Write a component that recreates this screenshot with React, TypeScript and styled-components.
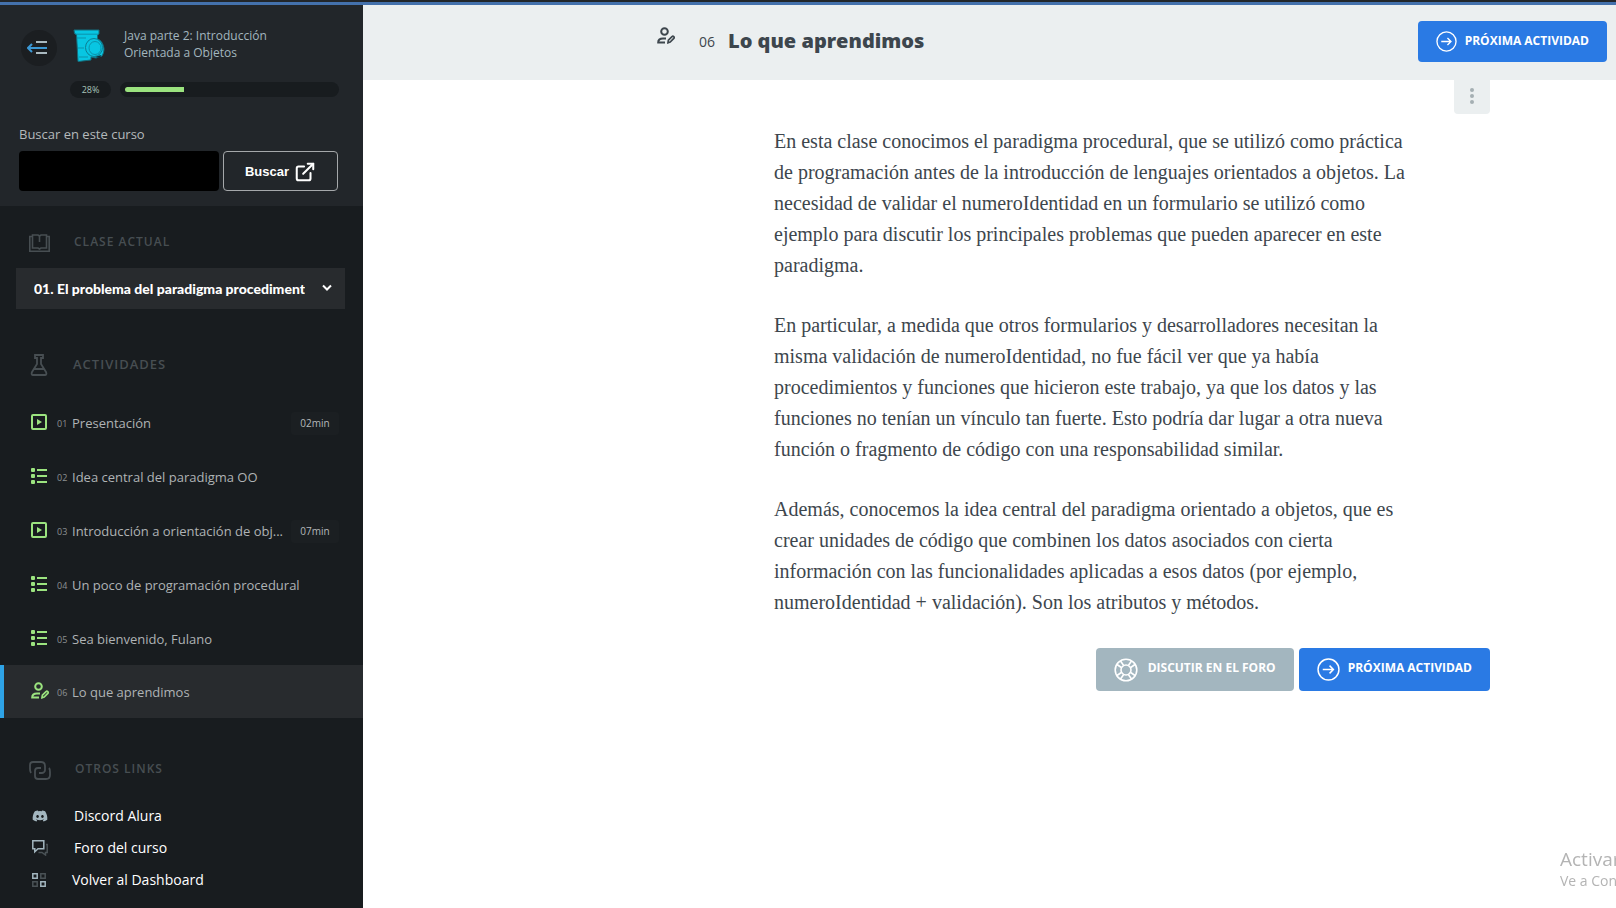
import React from 'react';
import styled, { createGlobalStyle, css } from 'styled-components';
import { ExternalLink } from 'lucide-react';
import { FaDiscord } from 'react-icons/fa';

const sans = `'Open Sans', 'Noto Sans', sans-serif`;
const serif = `'Liberation Serif', serif`;

const GlobalStyle = createGlobalStyle`
  *, *::before, *::after { box-sizing: border-box; }
  body {
    margin: 0;
    font-family: ${sans};
    background: #fff;
  }
  h1, h2, p, ul, ol { margin: 0; padding: 0; }
  ul, ol { list-style: none; }
  a { color: inherit; text-decoration: none; }
  button, input, select { font-family: inherit; margin: 0; }
  button { cursor: pointer; }
  svg { display: block; flex: none; }
`;

const Page = styled.div`
  min-height: 100vh;
  display: flex;
  flex-direction: column;
`;

const TopStrip = styled.div`
  height: 5px;
  background: #22262a;
  border-bottom: 3px solid #4471ac;
`;

const Columns = styled.div`
  flex: 1;
  display: flex;
`;

/* ---------- Sidebar ---------- */

const Sidebar = styled.aside`
  flex: 0 0 363px;
  min-width: 0;
  background: #181c1f;
  color: #b4b9bb;
`;

const CourseHead = styled.div`
  height: 201px;
  padding: 22px 24px 0 19px;
  background: #22262a;
`;

const CourseRow = styled.div`
  display: flex;
  align-items: center;
  height: 38px;
`;

const MenuToggle = styled.button`
  width: 36px;
  height: 36px;
  margin: 4px 16px 0 2px;
  padding: 0 4px 0 0;
  border: 0;
  border-radius: 50%;
  background: #1b1e21;
  display: grid;
  place-items: center;
`;

const CourseName = styled.a`
  margin: 0 0 4px 19px;
  font-size: 12px;
  line-height: 17px;
  color: #a3b6bf;
`;

const ProgressRow = styled.div`
  display: flex;
  align-items: center;
  gap: 9px;
  margin: 16px 0 0 51px;
`;

const Percent = styled.span`
  width: 41px;
  height: 17px;
  border-radius: 9px;
  background: #181c1f;
  color: #a9c3ba;
  font-size: 9px;
  line-height: 17px;
  text-align: center;
`;

const Track = styled.div`
  flex: 1;
  height: 15px;
  padding: 5px;
  border-radius: 8px;
  background: #181c1f;
`;

const Fill = styled.div`
  height: 5px;
  border-radius: 3px 0 0 3px;
  background: #9be37f;
`;

const SearchForm = styled.form`
  margin-top: 26px;
`;

const SearchLabel = styled.label`
  display: block;
  font-size: 13px;
  line-height: 20px;
  color: #b4b9bb;
`;

const SearchRow = styled.div`
  display: flex;
  gap: 4px;
  margin-top: 7px;
`;

const SearchInput = styled.input`
  width: 200px;
  height: 40px;
  padding: 0 12px;
  border: 0;
  border-radius: 4px;
  background: #000;
  color: #fff;
`;

const SearchButton = styled.button`
  width: 115px;
  height: 40px;
  padding: 0;
  display: flex;
  align-items: center;
  justify-content: center;
  gap: 5px;
  border: 1px solid #a5a8aa;
  border-radius: 4px;
  background: transparent;
  color: #fff;
  font-family: 'Liberation Sans', sans-serif;
  font-size: 13px;
  font-weight: 700;
  svg { margin-top: 2px; }
`;

const SectionTitle = styled.h2<{ $large?: boolean }>`
  display: flex;
  align-items: center;
  gap: 24px;
  height: 24px;
  padding-left: 29px;
  color: #474e52;
  font-size: ${(p) => (p.$large ? 13 : 12)}px;
  line-height: 20px;
  font-weight: 600;
  letter-spacing: 1px;
  text-transform: uppercase;
  svg { margin-top: 2px; }
`;

const LessonSection = styled.section`
  padding-top: 24px;
`;

const LessonPicker = styled.div`
  position: relative;
  margin: 14px 18px 0 16px;
  svg {
    position: absolute;
    right: 13px;
    top: 16px;
    pointer-events: none;
  }
`;

const LessonSelect = styled.select`
  display: block;
  width: 100%;
  height: 41px;
  padding: 0 40px 0 18px;
  border: 0;
  border-radius: 0;
  appearance: none;
  background: #282b2e;
  color: #fff;
  font-family: Lato, sans-serif;
  font-size: 14px;
  font-weight: 900;
`;

const ActivitySection = styled.section`
  padding-top: 43px;
`;

const ActivityList = styled.ol`
  margin-top: 19px;
`;

const ActivityLink = styled.a<{ $active?: boolean }>`
  display: flex;
  align-items: center;
  height: 54px;
  padding: 2px 24px 0 27px;
  border-left: 4px solid transparent;
  ${(p) => p.$active && css`
    height: 53px;
    padding-top: 0;
    background: #282b2e;
    border-left-color: #2ea3e6;
  `}
`;

const ActivityIcon = styled.span`
  width: 26px;
  padding-bottom: 2px;
`;

const ActivityNumber = styled.span`
  width: 15px;
  font-size: 9px;
  line-height: 20px;
  padding-top: 2px;
  color: #8c9193;
`;

const ActivityName = styled.span`
  flex: 1;
  min-width: 0;
  font-size: 13px;
  line-height: 20px;
  color: #afb3b5;
  white-space: nowrap;
`;

const Duration = styled.span`
  width: 48px;
  height: 23px;
  border-radius: 3px;
  background: #1b1f22;
  color: #b4b9bb;
  font-size: 10px;
  line-height: 23px;
  text-align: center;
`;

const LinksSection = styled.section`
  padding-top: 39px;
`;

const LinkList = styled.ul`
  margin-top: 19px;
  padding-left: 32px;
`;

const SideLink = styled.a`
  display: flex;
  align-items: center;
  gap: 26px;
  height: 32px;
  color: #fff;
  font-size: 14px;
  line-height: 20px;
  font-weight: 500;
`;

/* ---------- Main ---------- */

const Main = styled.main`
  flex: 1;
  min-width: 0;
`;

const TaskHeader = styled.header`
  display: flex;
  align-items: center;
  height: 75px;
  padding: 0 9px 2px 294px;
  background: #ebeff0;
  color: #3d464d;
`;

const HeaderIcon = styled.span`
  align-self: flex-start;
  margin: 22px 24px 0 0;
`;

const TaskNumber = styled.span`
  margin-right: 13px;
  font-size: 14px;
  line-height: 28px;
`;

const TaskTitle = styled.h1`
  flex: 1;
  padding-bottom: 2px;
  font-size: 20px;
  line-height: 28px;
  font-weight: 800;
`;

const ActionButton = styled.button<{ $tone?: 'blue' | 'gray'; $tall?: boolean }>`
  display: flex;
  align-items: center;
  gap: ${(p) => (p.$tone === 'gray' ? 10 : 8)}px;
  height: ${(p) => (p.$tall ? 43 : 41)}px;
  padding: 0 18px;
  border: 0;
  border-radius: 4px;
  background: ${(p) => (p.$tone === 'gray' ? '#a3b6bf' : '#2a7ae4')};
  color: #fff;
  font-size: 12px;
  line-height: 20px;
  font-weight: 700;
  text-transform: uppercase;
  white-space: nowrap;
  span { padding-bottom: ${(p) => (p.$tall ? 4 : 2)}px; }
`;

const Body = styled.div`
  width: 716px;
  margin: 0 126px 0 auto;
`;

const OptionsButton = styled.button`
  display: grid;
  place-items: center;
  width: 36px;
  height: 34px;
  margin-left: auto;
  padding: 0 0 2px;
  border: 0;
  border-radius: 0 0 4px 4px;
  background: #ebeff0;
`;

const Article = styled.article`
  max-width: 640px;
  margin-top: 12px;
  font-family: ${serif};
  font-size: 20px;
  line-height: 31px;
  color: #3d464d;
  p + p { margin-top: 29px; }
`;

const Actions = styled.div`
  display: flex;
  justify-content: flex-end;
  gap: 5px;
  margin-top: 30px;
`;

const Watermark = styled.div`
  position: fixed;
  right: 0;
  bottom: 17px;
  width: 56px;
  overflow: hidden;
  white-space: nowrap;
  color: #b4b4b4;
`;

const WatermarkTitle = styled.div`
  font-size: 19px;
  line-height: 24px;
`;

const WatermarkText = styled.div`
  font-size: 14px;
  line-height: 20px;
`;

/* ---------- Icons ---------- */

const CollapseIcon = () => (
  <svg width="20" height="14" viewBox="0 0 20 14" fill="none" strokeWidth="2">
    <path d="M9 1h11M9 12h11" stroke="#a9b9c0" />
    <path d="M1 7h19M5 3L1 7l4 4" stroke="#3b98d4" />
  </svg>
);

const CourseIcon = () => (
  <svg width="32" height="34" viewBox="0 0 32 34">
    <path d="M1 1h25v4l-1.500 1v4c3.500 1 6 5 6.500 10 0 3-1 5-2 7l-6 2-5-1v3l-13 1.500L3.500 5.500 1.500 4.500z" fill="#08c6e2" stroke="#146c7c" />
    <path d="M2.500 5.200h22.500M4 9h9M5 19h6M6 28h9" stroke="#0b93ab" fill="none" />
    <ellipse cx="21" cy="18.500" rx="8.500" ry="9" fill="#08c6e2" stroke="#0b7e93" />
    <ellipse cx="22" cy="19" rx="6" ry="6.500" fill="none" stroke="#0b93ab" />
    <path d="M22 28l6-2-1 3z" fill="#123038" />
  </svg>
);

const BookIcon = () => (
  <svg width="21" height="18" viewBox="0 0 21 18" fill="none" stroke="currentColor" strokeWidth="1.6">
    <path d="M3 2.500H.8v14.700h19.400V2.500H18" />
    <path d="M3.500 1h5.500l1.500 1 1.500-1h5.500v13h-5.500l-1.500 1-1.500-1H3.500zM10.500 2v6" />
  </svg>
);

const FlaskIcon = () => (
  <svg width="20" height="22" viewBox="0 0 20 22" fill="none" stroke="currentColor" strokeWidth="1.800">
    <path d="M6 1h8v3h-2v6l5 8c1 2 0 3-1 3H4c-1 0-2-1-1-3l5-8V4H6zM5 15h10" />
  </svg>
);

const ChainIcon = () => (
  <svg width="22" height="19" viewBox="0 0 22 19" fill="none" stroke="currentColor" strokeWidth="1.800">
    <path d="M2 12C.8 10 1 9 1 7V4c0-2 1-3 3-3h8c2 0 4 1 4 4v4c0 2-2 3-3 3h-3" />
    <path d="M20 7c1 1 1 2 1 4v3c0 2-1 4-4 4H9c-2 0-3-1-3-3v-5c0-2 1-3 3-3h3" />
  </svg>
);

const VideoIcon = () => (
  <svg width="16" height="16" viewBox="0 0 16 16">
    <rect x="1" y="1" width="14" height="14" rx="1" fill="none" stroke="#9be37f" strokeWidth="2" />
    <path d="M6 5l5 3-5 3z" fill="#9be37f" />
  </svg>
);

const ListIcon = () => (
  <svg width="16" height="16" viewBox="0 0 16 16" fill="#9be37f">
    <rect width="4" height="4" rx="1" />
    <rect y="6" width="4" height="4" rx="1" />
    <rect y="12" width="4" height="4" rx="1" />
    <rect x="6" y="1" width="10" height="2" />
    <rect x="6" y="7" width="10" height="2" />
    <rect x="6" y="13" width="10" height="2" />
  </svg>
);

const PersonEditIcon = ({ color }: { color: string }) => (
  <svg width="18" height="17" viewBox="0 0 18 17" fill="none" stroke={color} strokeWidth="2">
    <circle cx="7.500" cy="4.500" r="3.300" />
    <path d="M8 15.500H1.200c0-3 2-4 4.800-4h3" />
    <path d="M11 15.700l.4-2.500 3.600-3.600c1.200-1 2.800.6 1.800 1.800l-3.600 3.600z" strokeWidth="1.700" />
  </svg>
);

const ArrowCircleIcon = ({ size }: { size: number }) => (
  <svg width={size} height={size} viewBox="0 0 22 22" fill="none" stroke="#fff" strokeWidth="1.400">
    <circle cx="11" cy="11" r="10" />
    <path d="M5.500 11h10M12 7.300l3.700 3.700-3.700 3.700" />
  </svg>
);

const LifebuoyIcon = () => (
  <svg width="24" height="24" viewBox="0 0 24 24" fill="none" stroke="#fff" strokeWidth="1.600">
    <circle cx="12" cy="12" r="10.800" />
    <circle cx="12" cy="12" r="5" />
    <path d="M7.300 9.500L3 6.500M9.500 7.300L6.500 3M14.500 7.300l3-4.300M16.700 9.500l4.300-3M16.700 14.500l4.300 3M14.500 16.700l3 4.300M9.500 16.700l-3 4.300M7.300 14.500l-4.300 3" />
  </svg>
);

const ForumIcon = () => (
  <svg width="16" height="16" viewBox="0 0 16 16" fill="none" strokeWidth="1.500">
    <path d="M14 4.500h1.200v8H13.500v2.500L10 12.500H6.500" stroke="#4a5256" />
    <path d="M.8.800h11v8H6l-3.200 3v-3h-2z" stroke="#a3b6bf" />
  </svg>
);

const DashboardIcon = () => (
  <svg width="14" height="14" viewBox="0 0 14 14" fill="none" strokeWidth="1.500">
    <path d="M8.800.800h4.400v4.400H8.800zM.8 8.800h4.400v4.400H.8z" stroke="#4a5256" />
    <path d="M.8.800h4.400v4.400H.8zM8.800 8.800h4.400v4.400H8.800z" stroke="#a3b6bf" />
  </svg>
);

const DotsIcon = () => (
  <svg width="4" height="18" viewBox="0 0 4 18" fill="#a5afb3">
    <circle cx="2" cy="3" r="2" />
    <circle cx="2" cy="9" r="2" />
    <circle cx="2" cy="15" r="2" />
  </svg>
);

/* ---------- Data ---------- */

type Kind = 'video' | 'list' | 'summary';

const activities: { name: string; kind: Kind; duration?: string; active?: boolean }[] = [
  { name: 'Presentación', kind: 'video', duration: '02min' },
  { name: 'Idea central del paradigma OO', kind: 'list' },
  { name: 'Introducción a orientación de obj...', kind: 'video', duration: '07min' },
  { name: 'Un poco de programación procedural', kind: 'list' },
  { name: 'Sea bienvenido, Fulano', kind: 'list' },
  { name: 'Lo que aprendimos', kind: 'summary', active: true },
];

const kindIcons: Record<Kind, React.ReactNode> = {
  video: <VideoIcon />,
  list: <ListIcon />,
  summary: <PersonEditIcon color="#9be37f" />,
};

const paragraphs = [
  'En esta clase conocimos el paradigma procedural, que se utilizó como práctica de programación antes de la introducción de lenguajes orientados a objetos. La necesidad de validar el numeroIdentidad en un formulario se utilizó como ejemplo para discutir los principales problemas que pueden aparecer en este paradigma.',
  'En particular, a medida que otros formularios y desarrolladores necesitan la misma validación de numeroIdentidad, no fue fácil ver que ya había procedimientos y funciones que hicieron este trabajo, ya que los datos y las funciones no tenían un vínculo tan fuerte. Esto podría dar lugar a otra nueva función o fragmento de código con una responsabilidad similar.',
  'Además, conocemos la idea central del paradigma orientado a objetos, que es crear unidades de código que combinen los datos asociados con cierta información con las funcionalidades aplicadas a esos datos (por ejemplo, numeroIdentidad + validación). Son los atributos y métodos.',
];

const progress = 28;

export default function App() {
  return (
    <Page>
      <GlobalStyle />
      <TopStrip />
      <Columns>
        <Sidebar>
          <CourseHead>
            <CourseRow>
              <MenuToggle aria-label="Contraer menú"><CollapseIcon /></MenuToggle>
              <CourseIcon />
              <CourseName href="#curso">Java parte 2: Introducción<br />Orientada a Objetos</CourseName>
            </CourseRow>
            <ProgressRow>
              <Percent>{progress}%</Percent>
              <Track><Fill style={{ width: `${progress}%` }} /></Track>
            </ProgressRow>
            <SearchForm onSubmit={(e) => e.preventDefault()}>
              <SearchLabel htmlFor="buscar">Buscar en este curso</SearchLabel>
              <SearchRow>
                <SearchInput id="buscar" type="text" />
                <SearchButton type="submit">Buscar <ExternalLink size={22} strokeWidth={2.2} /></SearchButton>
              </SearchRow>
            </SearchForm>
          </CourseHead>

          <LessonSection>
            <SectionTitle><BookIcon />Clase actual</SectionTitle>
            <LessonPicker>
              <LessonSelect aria-label="Clase actual">
                <option>01. El problema del paradigma procediment</option>
              </LessonSelect>
              <svg width="10" height="8" viewBox="0 0 10 8" fill="none" stroke="#fff" strokeWidth="2">
                <path d="M1 1.500l4 4 4-4" />
              </svg>
            </LessonPicker>
          </LessonSection>

          <ActivitySection>
            <SectionTitle $large><FlaskIcon />Actividades</SectionTitle>
            <ActivityList>
              {activities.map((a, i) => (
                <li key={a.name}>
                  <ActivityLink href={`#actividad-${i + 1}`} $active={a.active}>
                    <ActivityIcon>{kindIcons[a.kind]}</ActivityIcon>
                    <ActivityNumber>0{i + 1}</ActivityNumber>
                    <ActivityName>{a.name}</ActivityName>
                    {a.duration && <Duration>{a.duration}</Duration>}
                  </ActivityLink>
                </li>
              ))}
            </ActivityList>
          </ActivitySection>

          <LinksSection>
            <SectionTitle><ChainIcon />Otros links</SectionTitle>
            <LinkList>
              <li><SideLink href="#discord"><FaDiscord size={16} color="#a3b6bf" />Discord Alura</SideLink></li>
              <li><SideLink href="#foro"><ForumIcon />Foro del curso</SideLink></li>
              <li><SideLink href="#dashboard"><DashboardIcon />Volver al Dashboard</SideLink></li>
            </LinkList>
          </LinksSection>
        </Sidebar>

        <Main>
          <TaskHeader>
            <HeaderIcon><PersonEditIcon color="#3d464d" /></HeaderIcon>
            <TaskNumber>06</TaskNumber>
            <TaskTitle>Lo que aprendimos</TaskTitle>
            <ActionButton><ArrowCircleIcon size={21} /><span>Próxima actividad</span></ActionButton>
          </TaskHeader>
          <Body>
            <OptionsButton aria-label="Opciones"><DotsIcon /></OptionsButton>
            <Article>
              {paragraphs.map((text) => <p key={text}>{text}</p>)}
            </Article>
            <Actions>
              <ActionButton $tone="gray" $tall><LifebuoyIcon /><span>Discutir en el foro</span></ActionButton>
              <ActionButton $tall><ArrowCircleIcon size={23} /><span>Próxima actividad</span></ActionButton>
            </Actions>
          </Body>
        </Main>
      </Columns>
      <Watermark>
        <WatermarkTitle>Activar</WatermarkTitle>
        <WatermarkText>Ve a Con</WatermarkText>
      </Watermark>
    </Page>
  );
}
